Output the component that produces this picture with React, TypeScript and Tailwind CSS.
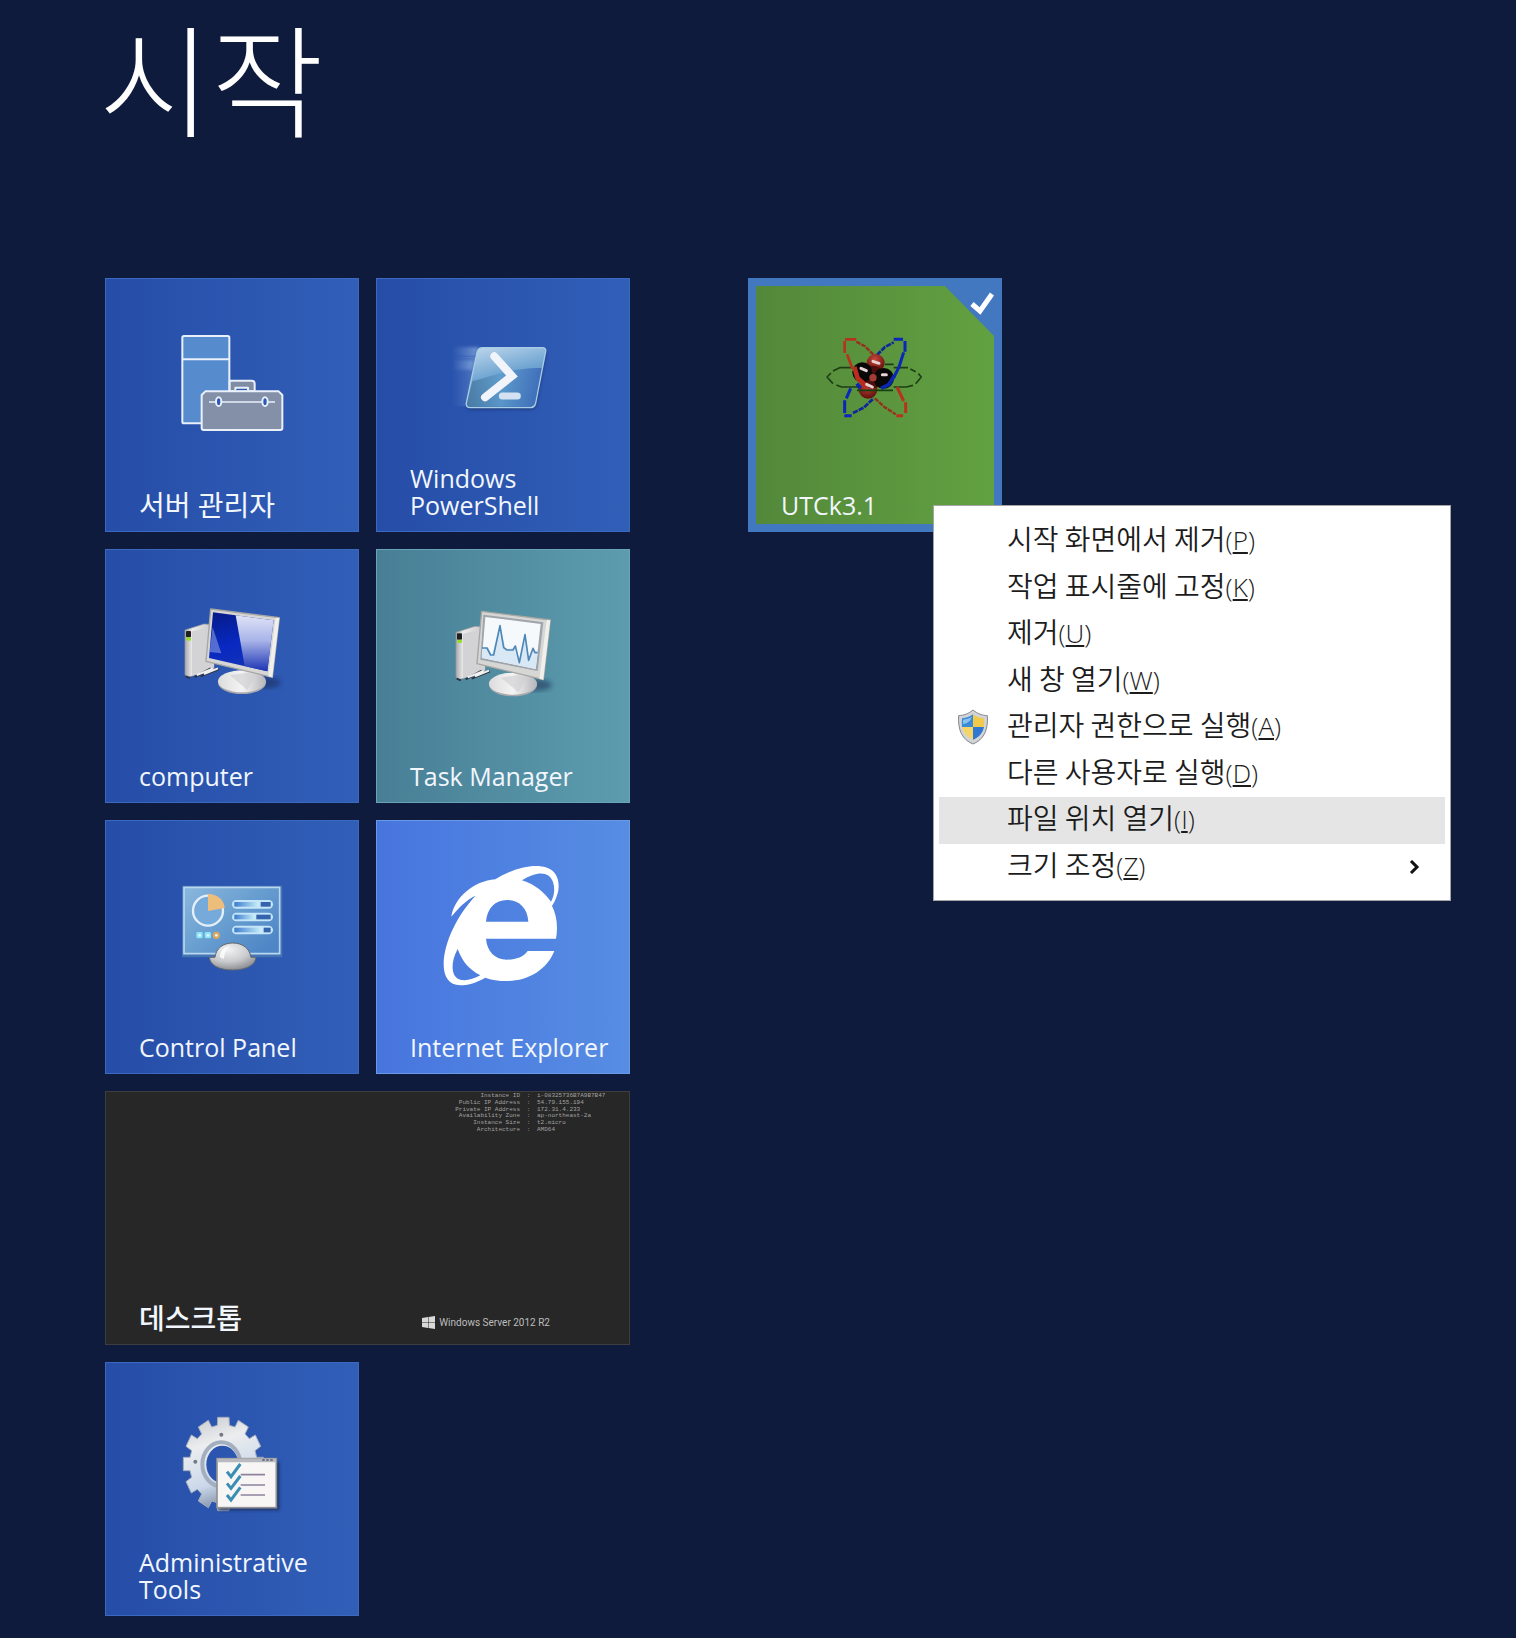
import type { ReactNode } from "react";

const BLUE = "bg-linear-to-r from-[#264da8] to-[#315fb8] border-[#3c69c0]";
const TEAL = "bg-linear-to-r from-[#487f96] to-[#5c9cae] border-[#69a5b5]";
const SKY = "bg-linear-to-r from-[#4775de] to-[#578de3] border-[#6a99e8]";

function Icon({ box, children }: { box: string; children: ReactNode }) {
  return (
    <svg viewBox={box} className="size-[130px] shrink-0 self-center" aria-hidden="true">
      {children}
    </svg>
  );
}

function ServerIcon() {
  return (
    <Icon box="199 133 390 390">
      <g stroke="#e9f0fa" strokeWidth="6" strokeLinejoin="round">
        <rect x="245" y="199" width="141" height="262" rx="5" fill="#568bcd" />
        <path d="M245 269H386" />
        <path d="M387 333H453Q462 333 462 342V365H387Z" fill="#7f8ca3" />
        <path d="M404 362V354H442V362" fill="#2c58ae" />
        <path d="M314 365H534L545 376V475Q545 481 539 481H309Q303 481 303 475V376Z" fill="#8390a8" />
        <path d="M325 397H523" strokeWidth="5" />
        <ellipse cx="354" cy="396" rx="8" ry="13" fill="#2c58b8" />
        <ellipse cx="493" cy="396" rx="8" ry="13" fill="#2c58b8" />
      </g>
    </Icon>
  );
}

function PowerShellIcon() {
  return (
    <Icon box="203 133 390 390">
      <defs>
        <linearGradient id="ps-face" x1="0" y1="0" x2="0.35" y2="1">
          <stop offset="0" stopColor="#c3d9ee" />
          <stop offset="0.5" stopColor="#74a8d3" />
          <stop offset="1" stopColor="#3f73b8" />
        </linearGradient>
        <linearGradient id="ps-low" x1="0" y1="0" x2="1" y2="0">
          <stop offset="0" stopColor="#47789f" />
          <stop offset="0.45" stopColor="#5d9ccb" />
          <stop offset="1" stopColor="#3a68b8" />
        </linearGradient>
        <linearGradient id="ps-trail" x1="0" y1="0" x2="1" y2="0">
          <stop offset="0" stopColor="#8fb4e4" stopOpacity="0" />
          <stop offset="1" stopColor="#a5c6ec" stopOpacity="0.6" />
        </linearGradient>
        <filter id="ps-soft"><feGaussianBlur stdDeviation="4" /></filter>
      </defs>
      <path d="M245 232H325L316 262H245ZM245 272H312L306 300H245Z" fill="url(#ps-trail)" filter="url(#ps-soft)" />
      <path d="M245 262H316L288 410H245Z" fill="url(#ps-trail)" opacity="0.5" />
      <path d="M337 240H518Q530 240 528 252L499 404Q496 420 482 420H302Q288 420 290 406Z" fill="#132c63" opacity="0.6" filter="url(#ps-soft)" />
      <path d="M337 234H516Q528 234 526 246L496 400Q493 414 479 414H300Q286 414 288 400L320 248Q323 234 337 234Z" fill="url(#ps-face)" stroke="#a8cde4" strokeWidth="4" />
      <path d="M306 335C370 318 420 295 514 295L494 398Q491 411 478 411H302Q289 411 291 399Z" fill="url(#ps-low)" opacity="0.85" />
      <path d="M372 260L425 319L344 383" fill="none" stroke="#f1f5fb" strokeWidth="24" strokeLinecap="round" strokeLinejoin="miter" />
      <path d="M396 379H441" stroke="#d3e1f2" strokeWidth="21" strokeLinecap="round" />
    </Icon>
  );
}

function MonitorBody({ id, children }: { id: string; children: ReactNode }) {
  return (
    <>
      <defs>
        <linearGradient id={`${id}-case`} x1="0" y1="0" x2="1" y2="0">
          <stop offset="0" stopColor="#a9a9ad" />
          <stop offset="0.25" stopColor="#ededed" />
          <stop offset="1" stopColor="#c5c5c8" />
        </linearGradient>
        <linearGradient id={`${id}-foot`} x1="0" y1="0" x2="1" y2="0">
          <stop offset="0" stopColor="#dcdcdc" />
          <stop offset="0.5" stopColor="#f4f4f4" />
          <stop offset="1" stopColor="#b5b5ba" />
        </linearGradient>
        <filter id={`${id}-soft`}><feGaussianBlur stdDeviation="8" /></filter>
      </defs>
      <ellipse cx="490" cy="414" rx="50" ry="18" fill="#12284f" opacity="0.5" filter={`url(#${id}-soft)`} />
      <path d="M253 256L310 238L340 240V372L262 398L253 390Z" fill={`url(#${id}-case)`} stroke="#9a9a9e" strokeWidth="2" />
      <path d="M274 260L340 245V368L274 394Z" fill="#d3d3d5" />
      <rect x="256" y="259" width="15" height="19" rx="3" fill="#202020" />
      <rect x="257" y="278" width="14" height="10" rx="3" fill="#96dd2d" />
      <path d="M255 395L268 400M282 397L330 371M300 395L355 373" stroke="#2f3444" strokeWidth="6" />
      <path d="M288 391L336 372M310 388L352 371" stroke="#f0f0f0" strokeWidth="6" />
      <path d="M398 378L460 386L458 412H398Z" fill="#b9b9bd" />
      <ellipse cx="424" cy="414" rx="72" ry="34" fill="#a9a9ad" />
      <ellipse cx="424" cy="410" rx="72" ry="33" fill={`url(#${id}-foot)`} />
      <path d="M388 392L440 384L466 392L440 436Z" fill="#cfcfd2" opacity="0.65" />
      <path d="M330 193L536 219L515 398L316 350Z" fill="#d6d6d4" stroke="#a6a6a4" strokeWidth="4" strokeLinejoin="round" />
      <path d="M525 219L536 220L515 398L503 395Z" fill="#f0f0ec" />
      {children}
    </>
  );
}

function ComputerIcon() {
  return (
    <Icon box="199 121 390 390">
      <MonitorBody id="pc">
        <defs>
          <linearGradient id="pc-scr" x1="0" y1="0" x2="0.3" y2="1">
            <stop offset="0" stopColor="#061a86" />
            <stop offset="0.6" stopColor="#0829c2" />
            <stop offset="1" stopColor="#1331b6" />
          </linearGradient>
          <linearGradient id="pc-shine" x1="0" y1="0" x2="0" y2="1">
            <stop offset="0" stopColor="#dfe3f7" />
            <stop offset="0.45" stopColor="#a9b4e8" />
            <stop offset="1" stopColor="#1a33b4" />
          </linearGradient>
        </defs>
        <path d="M337 203L519 227L500 380L325 340Z" fill="url(#pc-scr)" />
        <path d="M405 212L519 227L500 380L432 364Z" fill="url(#pc-shine)" />
        <path d="M336 248L362 326L327 322Z" fill="#96a5e2" opacity="0.55" />
      </MonitorBody>
    </Icon>
  );
}

function TaskManagerIcon() {
  return (
    <Icon box="203 121 390 390">
      <g transform="translate(4 7)">
        <MonitorBody id="tm">
          <path d="M335 203L515 226L498 372L326 338Z" fill="#9fa5ad" />
          <path d="M341 210L507 231L492 366L331 333Z" fill="#f6f9fc" />
          <path d="M332 303L348 299L360 326L383 240L403 305L427 304L443 347L459 265L470 340L484 304L498 319L492 366L330 332Z" fill="#d9e8f5" />
          <path d="M331 303H346L357 324H366L385 236L396 302L406 309H424L431 297L443 347L460 263L471 340L484 304L490 317H498" fill="none" stroke="#4d87b8" strokeWidth="5" strokeLinejoin="round" />
        </MonitorBody>
      </g>
    </Icon>
  );
}

function ControlPanelIcon() {
  return (
    <Icon box="199 125 390 390">
      <defs>
        <linearGradient id="cp-face" x1="0" y1="0" x2="1" y2="0.8">
          <stop offset="0" stopColor="#8bb7dd" />
          <stop offset="0.5" stopColor="#699fd0" />
          <stop offset="1" stopColor="#4d85c6" />
        </linearGradient>
        <linearGradient id="cp-bar" x1="0" y1="0" x2="1" y2="0">
          <stop offset="0" stopColor="#3d7bcf" />
          <stop offset="1" stopColor="#c9f1fa" />
        </linearGradient>
        <radialGradient id="cp-dome" cx="0.4" cy="0.25" r="0.8">
          <stop offset="0" stopColor="#f3f3f3" />
          <stop offset="0.55" stopColor="#c9cbce" />
          <stop offset="1" stopColor="#85878b" />
        </radialGradient>
      </defs>
      <path d="M244 214H545V429H244Z" fill="#4474b3" />
      <path d="M250 219H537V418H250Z" fill="url(#cp-face)" stroke="#b9d7ef" strokeWidth="5" />
      <circle cx="322" cy="289" r="45" fill="#76aada" stroke="#e6f0fb" strokeWidth="7" />
      <path d="M322 290V239C348 239 371 255 372 281Z" fill="#edbd7c" />
      {[270, 308, 347].map((y, i) => (
        <g key={y}>
          <rect x="394" y={y - 13} width="123" height="26" rx="13" fill="#c5e6f8" />
          <rect x="401" y={y - 7} width={[74, 62, 82][i]} height="14" fill="url(#cp-bar)" />
          <rect x={[480, 467, 489][i]} y={y - 7} width={[30, 43, 21][i]} height="14" fill="#3563ad" />
        </g>
      ))}
      <rect x="287" y="353" width="19" height="19" rx="4" fill="#8be4f8" />
      <rect x="312" y="353" width="19" height="19" rx="4" fill="#8be4f8" />
      <circle cx="347" cy="363" r="11" fill="#dfa55b" />
      <g fill="#e4fbff">
        <circle cx="297" cy="363" r="4" />
        <circle cx="322" cy="363" r="4" />
        <circle cx="347" cy="363" r="4" />
      </g>
      <path d="M326 429H343C346 402 367 386 396 386C426 386 447 402 451 429H466C464 452 438 467 396 467C354 467 328 452 326 429Z" fill="url(#cp-dome)" stroke="#64696f" strokeWidth="3" />
      <path d="M357 428C359 410 370 397 388 395C376 406 370 418 370 434Z" fill="#ffffff" opacity="0.8" />
    </Icon>
  );
}

function ExplorerIcon() {
  return (
    <Icon box="203 125 390 390">
      <path
        fill="#ffffff"
        fillRule="evenodd"
        d="M557 373H347C350 410 373 436 410 436C437 436 460 428 472 410H552C530 465 475 500 410 500C385 500 362 497 345 490C315 507 290 513 270 513C235 513 220 487 220 450C220 385 262 300 316 244C290 255 265 280 243 307C252 250 310 200 375 195C410 172 460 155 497 155C545 155 565 180 565 215C565 235 556 258 545 275C558 300 564 335 557 373ZM347 322C350 282 375 257 410 257C447 257 472 282 474 322ZM455 198C495 210 522 235 542 262C553 242 554 222 548 203C536 170 500 170 455 198ZM262 404C245 435 243 465 252 482C264 505 300 500 330 483C295 465 275 440 262 404Z"
      />
    </Icon>
  );
}

const gearPoints = Array.from({ length: 12 }, (_, i) => {
  const step = (offset: number, r: number) => {
    const a = ((i * 30 + offset) * Math.PI) / 180;
    return `${Math.round(368 + Math.sin(a) * r * 0.86)},${Math.round(329 - Math.cos(a) * r)}`;
  };
  return [step(-10, 118), step(-8, 141), step(8, 141), step(10, 118)].join(" ");
}).join(" ");

function AdminToolsIcon() {
  return (
    <Icon box="199 131 390 390">
      <defs>
        <linearGradient id="gear-metal" x1="0" y1="0" x2="0.3" y2="1">
          <stop offset="0" stopColor="#c4c7cb" />
          <stop offset="0.35" stopColor="#ebedef" />
          <stop offset="0.75" stopColor="#cbd8ea" />
          <stop offset="1" stopColor="#8292a8" />
        </linearGradient>
        <mask id="gear-hole">
          <rect x="199" y="131" width="390" height="390" fill="#fff" />
          <ellipse cx="365" cy="330" rx="48" ry="56" fill="#000" />
        </mask>
        <filter id="gear-soft"><feGaussianBlur stdDeviation="5" /></filter>
      </defs>
      <g mask="url(#gear-hole)">
        <polygon points={gearPoints} fill="url(#gear-metal)" stroke="#a3adbb" strokeWidth="3" strokeLinejoin="round" />
        <ellipse cx="362" cy="330" rx="57" ry="66" fill="none" stroke="#a3aebf" strokeWidth="12" />
        <circle cx="362" cy="241" r="6" fill="#737b86" />
        <circle cx="284" cy="322" r="6" fill="#737b86" />
      </g>
      <rect x="356" y="322" width="180" height="146" fill="#12284f" opacity="0.7" filter="url(#gear-soft)" />
      <rect x="349" y="313" width="178" height="147" fill="#f7f6f4" stroke="#929296" strokeWidth="5" />
      <path d="M351 318H525" stroke="#b9bac0" strokeWidth="11" />
      <path d="M485 317H517" stroke="#6d7280" strokeWidth="6" strokeDasharray="7 5" />
      <path d="M420 361H493M420 392H493M420 422H493" stroke="#8d839f" strokeWidth="5" />
      <g fill="none" stroke="#3b8db3" strokeWidth="9">
        <path d="M379 352L391 367L419 329" />
        <path d="M379 387L391 402L419 365" />
        <path d="M379 422L391 437L419 399" />
      </g>
    </Icon>
  );
}

function AtomIcon() {
  return (
    <Icon box="211 133 390 390">
      <defs>
        <radialGradient id="atom-red" cx="0.45" cy="0.3" r="0.7">
          <stop offset="0" stopColor="#c9453c" />
          <stop offset="1" stopColor="#5e100b" />
        </radialGradient>
      </defs>
      <g fill="none" strokeLinejoin="bevel">
        <path d="M340 294H300L280 304M274 310L262 322L280 342M290 346L306 352H360M436 284H462M462 294H505M512 298L528 306M536 312L545 322L528 342M520 347L500 352H462" stroke="#1e3f16" strokeWidth="5" />
        <path d="M412 256L424 244L436 232L462 218" stroke="#10259a" strokeWidth="8" strokeDasharray="16 3" />
        <path d="M462 209H490M496 214V246M492 248L478 292L463 322" stroke="#0927b8" strokeWidth="9" />
        <path d="M333 356L320 386M315 392V430M314 438H336" stroke="#0927b8" strokeWidth="9" />
        <path d="M340 430L372 414L402 386" stroke="#10259a" strokeWidth="8" strokeDasharray="16 3" />
        <path d="M338 296L322 254M315 250V214M316 209H350" stroke="#b5331f" strokeWidth="8" />
        <path d="M350 216L376 230L402 256M406 386L434 412L468 434" stroke="#95301c" strokeWidth="7" strokeDasharray="14 3" />
        <path d="M470 438H490M498 430V398M492 394L472 352" stroke="#b5331f" strokeWidth="9" />
      </g>
      <circle cx="408" cy="280" r="27" fill="url(#atom-red)" />
      <circle cx="385" cy="359" r="28" fill="url(#atom-red)" />
      <circle cx="399" cy="322" r="34" fill="#4d0f0c" />
      <circle cx="368" cy="308" r="30" fill="#080808" />
      <circle cx="432" cy="326" r="31" fill="#080808" />
      <circle cx="400" cy="324" r="11" fill="#a23c36" />
      <path d="M344 292L354 326L384 352" fill="none" stroke="#b92c1f" strokeWidth="14" />
      <path d="M352 342L362 356M464 318L448 344L424 356" fill="none" stroke="#0927b0" strokeWidth="11" />
      <path d="M352 362H460" stroke="#174010" strokeWidth="5" />
      <g fill="none" stroke="#e6d3d3" strokeWidth="9" strokeLinecap="round">
        <path d="M364 296L380 303" />
        <path d="M400 275L418 281" />
        <path d="M428 315H440" />
        <path d="M381 344L398 352" />
      </g>
    </Icon>
  );
}

function ShieldIcon() {
  return (
    <svg viewBox="96 628 96 108" className="h-[36px] w-[32px]" aria-hidden="true">
      <path d="M144 631C158 643 172 647 187 648C190 692 176 720 144 733C112 720 98 692 101 648C116 647 130 643 144 631Z" fill="#d2d4d7" stroke="#84878b" strokeWidth="3" />
      <path d="M144 644V682H111C110 673 110 664 111 656C124 655 135 651 144 644Z" fill="#3b8ad8" />
      <path d="M144 644V682H177C178 673 178 664 177 656C164 655 153 651 144 644Z" fill="#f1ca4b" />
      <path d="M144 720V682H111C115 700 126 713 144 720Z" fill="#f5d569" />
      <path d="M144 720V682H177C173 700 162 713 144 720Z" fill="#2f77d0" />
      <path d="M114 660C124 659 133 656 140 652C138 663 128 671 114 673Z" fill="#9fd0f4" opacity="0.8" />
    </svg>
  );
}

type TileProps = { label: string; tone: string; korean?: boolean; children: ReactNode };

function Tile({ label, tone, korean, children }: TileProps) {
  return (
    <button
      type="button"
      className={`flex h-[254px] flex-col items-start border pt-[35px] pr-4 pb-3 pl-[33px] text-left ${tone}`}
    >
      <span className="flex w-full justify-center pr-[17px]">{children}</span>
      <span className={`mt-auto max-w-[204px] ${korean ? "text-[28px]" : "text-[25px]"}`}>{label}</span>
    </button>
  );
}

const facts = [
  ["Instance ID", "i-08325736B7A9B7B47"],
  ["Public IP Address", "54.79.155.194"],
  ["Private IP Address", "172.31.4.233"],
  ["Availability Zone", "ap-northeast-2a"],
  ["Instance Size", "t2.micro"],
  ["Architecture", "AMD64"],
];

function DesktopTile() {
  return (
    <button
      type="button"
      className="col-span-2 flex h-[254px] flex-col justify-between border border-[#3d3d3d] bg-[#272727] pt-px pb-3 pl-[33px] text-left"
    >
      <span className="mr-[22px] flex h-[40px] w-[153px] flex-col justify-between self-end font-['Liberation_Mono'] text-[6px] leading-[6px] text-[#a2a2a2]">
        {facts.map(([name, value]) => (
          <span key={name} className="grid grid-cols-[66px_17px_1fr] whitespace-nowrap">
            <span className="text-right">{name}</span>
            <span className="text-center">:</span>
            <span>{value}</span>
          </span>
        ))}
      </span>
      <span className="flex w-full items-center justify-between pr-[79px]">
        <span className="text-[28px] font-medium">데스크톱</span>
        <span className="flex items-center gap-1 pt-2 font-['Roboto',sans-serif] text-[10px] leading-3 text-[#bdbdbd]">
          <svg viewBox="0 0 13 13" className="size-[13px]" fill="#d9d9d9" aria-hidden="true">
            <path d="M0 2L6 1V6H0ZM6.500 1L13 0V6H6.500ZM0 6.500H6V12L0 11ZM6.500 6.500H13V13L6.500 12Z" />
          </svg>
          Windows Server 2012 R2
        </span>
      </span>
    </button>
  );
}

const menu = [
  { text: "시작 화면에서 제거", hotkey: "P" },
  { text: "작업 표시줄에 고정", hotkey: "K" },
  { text: "제거", hotkey: "U" },
  { text: "새 창 열기", hotkey: "W" },
  { text: "관리자 권한으로 실행", hotkey: "A", shield: true },
  { text: "다른 사용자로 실행", hotkey: "D" },
  { text: "파일 위치 열기", hotkey: "I", active: true },
  { text: "크기 조정", hotkey: "Z", submenu: true },
];

function ContextMenu() {
  return (
    <div
      role="menu"
      className="absolute top-[227px] left-[185px] grid h-[396px] w-[518px] auto-rows-fr border border-[#a5a5a5] bg-white px-[5px] pt-3 pb-[10px] text-[#1c1c1c]"
    >
      {menu.map((item) => (
        <button
          key={item.text}
          type="button"
          role="menuitem"
          className={`grid grid-cols-[68px_1fr_auto] items-center pr-6 text-left ${item.active ? "bg-[#e5e5e5]" : ""}`}
        >
          <span className="pl-[18px]">{item.shield && <ShieldIcon />}</span>
          <span className="pb-1 font-['Noto_Sans_CJK_KR',sans-serif] text-[28px] leading-8 font-[350] whitespace-nowrap">
            {item.text}
            <span className="font-['Open_Sans',sans-serif] text-[26px] leading-8 font-light">
              (<span className="underline decoration-2 underline-offset-2">{item.hotkey}</span>)
            </span>
          </span>
          {item.submenu && (
            <svg viewBox="0 0 12 14" className="h-[14px] w-3" fill="none" stroke="#111" strokeWidth="3" aria-hidden="true">
              <path d="M2 1L8 7L2 13" />
            </svg>
          )}
        </button>
      ))}
    </div>
  );
}

function SelectedTile() {
  return (
    <div className="relative w-[254px]">
      <button
        type="button"
        aria-pressed="true"
        className="flex h-[254px] w-full flex-col items-start border-8 border-[#4178bf] bg-linear-to-r from-[#53883a] to-[#62a141] pt-[28px] pr-2 pb-[5px] pl-[25px] text-left"
      >
        <span className="flex w-full justify-center pr-[17px]">
          <AtomIcon />
        </span>
        <span className="mt-auto text-[25px]">UTCk3.1</span>
      </button>
      <svg viewBox="0 0 58 58" className="absolute top-0 right-0 size-[58px]" aria-hidden="true">
        <path d="M0 8V0H58V58H50L1 8Z" fill="#4178bf" />
        <path d="M28 26L36 33L48 16" fill="none" stroke="#fff" strokeWidth="5" />
      </svg>
      <ContextMenu />
    </div>
  );
}

export default function App() {
  return (
    <main className="min-h-screen bg-[#0e1b3d] pb-5 pl-[105px] font-['Open_Sans','Noto_Sans_CJK_KR',sans-serif] leading-[27px] text-[#f2f6fd]">
      <h1 className="-ml-[6px] h-[278px] font-['Noto_Sans_CJK_KR',sans-serif] text-[122px] leading-[150px] font-light text-white">
        시작
      </h1>
      <div className="flex items-start gap-[118px]">
        <section className="grid grid-cols-[254px_254px] gap-[17px]">
          <Tile label="서버 관리자" tone={BLUE} korean><ServerIcon /></Tile>
          <Tile label="Windows PowerShell" tone={BLUE}><PowerShellIcon /></Tile>
          <Tile label="computer" tone={BLUE}><ComputerIcon /></Tile>
          <Tile label="Task Manager" tone={TEAL}><TaskManagerIcon /></Tile>
          <Tile label="Control Panel" tone={BLUE}><ControlPanelIcon /></Tile>
          <Tile label="Internet Explorer" tone={SKY}><ExplorerIcon /></Tile>
          <DesktopTile />
          <Tile label="Administrative Tools" tone={BLUE}><AdminToolsIcon /></Tile>
        </section>
        <SelectedTile />
      </div>
    </main>
  );
}
